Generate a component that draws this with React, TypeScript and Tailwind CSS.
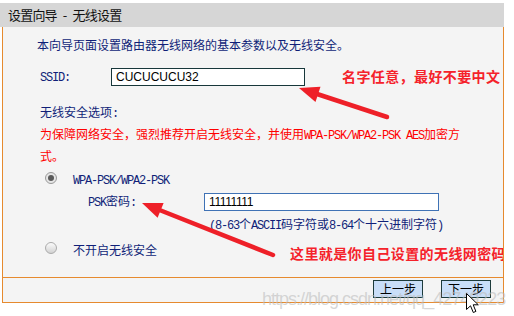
import React from 'react';

// half-width latin, as the router page draws it (6px per char)
function M({ children }: { children: React.ReactNode }) {
  return <span className="font-['Liberation_Mono',monospace] text-[12px] tracking-[-1.2px]">{children}</span>;
}

function Radio({ checked }: { checked?: boolean }) {
  return checked ? (
    <span className="flex h-[12px] w-[12px] items-center justify-center rounded-full border border-[#9a9a9a] bg-[#e6e6e6]">
      <span className="h-[6px] w-[6px] rounded-full bg-[#5a5a5a]" />
    </span>
  ) : (
    <span className="h-[12px] w-[12px] rounded-full border border-[#ababab] bg-gradient-to-b from-[#fbfbfb] to-[#d2d2d2]" />
  );
}

export default function App() {
  return (
    <div className="relative h-[316px] w-[514px] overflow-hidden bg-white font-['Noto_Sans_CJK_SC',sans-serif] text-[12px]">
      <div className="w-[504px] pt-[3px]">
        <div className="flex h-[24px] items-center bg-[#d6d6d6] pl-[8px] text-[13px] tracking-[-0.8px] text-[#111]">
          设置向导<span className="mx-[6px]">-</span>无线设置
        </div>

        <div className="relative ml-[2px] overflow-hidden border-x border-b border-[#e68a2e] bg-[#f4f4f4]">
          <div className="flex h-[250px] flex-col pl-[34px] text-[#101f78]">
            <p className="mt-[8px] h-[20px] leading-[20px]">本向导页面设置路由器无线网络的基本参数以及无线安全。</p>

            <div className="mt-[13px] flex h-[18px] items-center pl-[3px]">
              <span className="w-[71px]">
                <M>SSID:</M>
              </span>
              <div className="flex h-[18px] w-[194px] items-center border border-[#17373a] bg-white pl-[4px] font-['Liberation_Sans',sans-serif] text-[12px] text-black">
                CUCUCUCU32
              </div>
            </div>

            <p className="mt-[16px] h-[20px] pl-[3px] leading-[20px]">
              无线安全选项<M>:</M>
            </p>

            <p className="mt-[2px] pl-[3px] leading-[19px] text-[#ff0000]">
              为保障网络安全，强烈推荐开启无线安全，并使用<M>WPA-PSK/WPA2-PSK AES</M>加密方
              <br />
              式。
            </p>

            <div className="mt-[4px] flex h-[18px] items-center pl-[8px]">
              <Radio checked />
              <span className="ml-[16px] mt-[3px]">
                <M>WPA-PSK/WPA2-PSK</M>
              </span>
            </div>

            <div className="mt-[6px] flex h-[18px] items-center pl-[51px]">
              <span className="w-[116px]">
                <M>PSK</M>密码<M>:</M>
              </span>
              <div className="flex h-[18px] w-[235px] items-center border border-[#3f72b5] bg-white pl-[4px] font-['Liberation_Sans',sans-serif] text-[12px] tracking-[-0.4px] text-black">
                11111111
              </div>
            </div>

            <p className="mt-[5px] h-[16px] pl-[172px] leading-[16px]">
              <M>(8-63</M>个<M>ASCII</M>码字符或<M>8-64</M>个十六进制字符<M>)</M>
            </p>

            <div className="mt-[7px] flex h-[18px] items-center pl-[8px]">
              <Radio />
              <span className="ml-[16px] mt-[3px]">不开启无线安全</span>
            </div>
          </div>

          <div className="flex h-[25px] items-start justify-end gap-[18px] border-t border-[#e68a2e] pr-[12px] pt-[2px]">
            <button className="h-[18px] w-[50px] border border-[#1d3b3b] bg-[#c9def8] text-[12px] leading-[16px] text-black">上一步</button>
            <button className="h-[18px] w-[50px] border border-[#1d3b3b] bg-[#c9def8] text-[12px] leading-[16px] text-black">下一步</button>
          </div>

          {/* red notes written over the page */}
          <span className="absolute left-[339px] top-[42px] whitespace-nowrap text-[14px] font-bold leading-[14px] tracking-[0.4px] text-[#f5222a]">
            名字任意，最好不要中文
          </span>
          <span className="absolute left-[287px] top-[219px] whitespace-nowrap text-[14px] font-bold leading-[14px] tracking-[0.4px] text-[#f5222a]">
            这里就是你自己设置的无线网密码
          </span>
        </div>
      </div>

      <svg className="pointer-events-none absolute left-0 top-0" width="514" height="316" viewBox="0 0 514 316">
        <line x1="387" y1="117" x2="314" y2="93" stroke="#ee2028" strokeWidth="4.5" strokeLinecap="round" />
        <polygon points="299,88 320.5,86.7 315.5,101.9" fill="#ee2028" />
        <line x1="273" y1="255" x2="157" y2="209" stroke="#ee2028" strokeWidth="4.5" strokeLinecap="round" />
        <polygon points="142,203 163.6,203 157.6,217.8" fill="#ee2028" />
      </svg>

      <span className="pointer-events-none absolute left-[262px] top-[286px] whitespace-nowrap font-['Liberation_Sans',sans-serif] text-[18px] tracking-[-1px] text-[#bdbdbd]/60">
        https://blog.csdn.net/qq_42749223
      </span>

      <svg className="absolute left-[466px] top-[293px]" width="14" height="21" viewBox="0 0 14 21">
        <path d="M0.5 0.5 L0.5 16.5 L4.5 12.8 L7.3 19.5 L9.9 18.4 L7.2 11.8 L12.3 11.8 Z" fill="#fff" stroke="#000" strokeWidth="1" strokeLinejoin="round" />
      </svg>
    </div>
  );
}
